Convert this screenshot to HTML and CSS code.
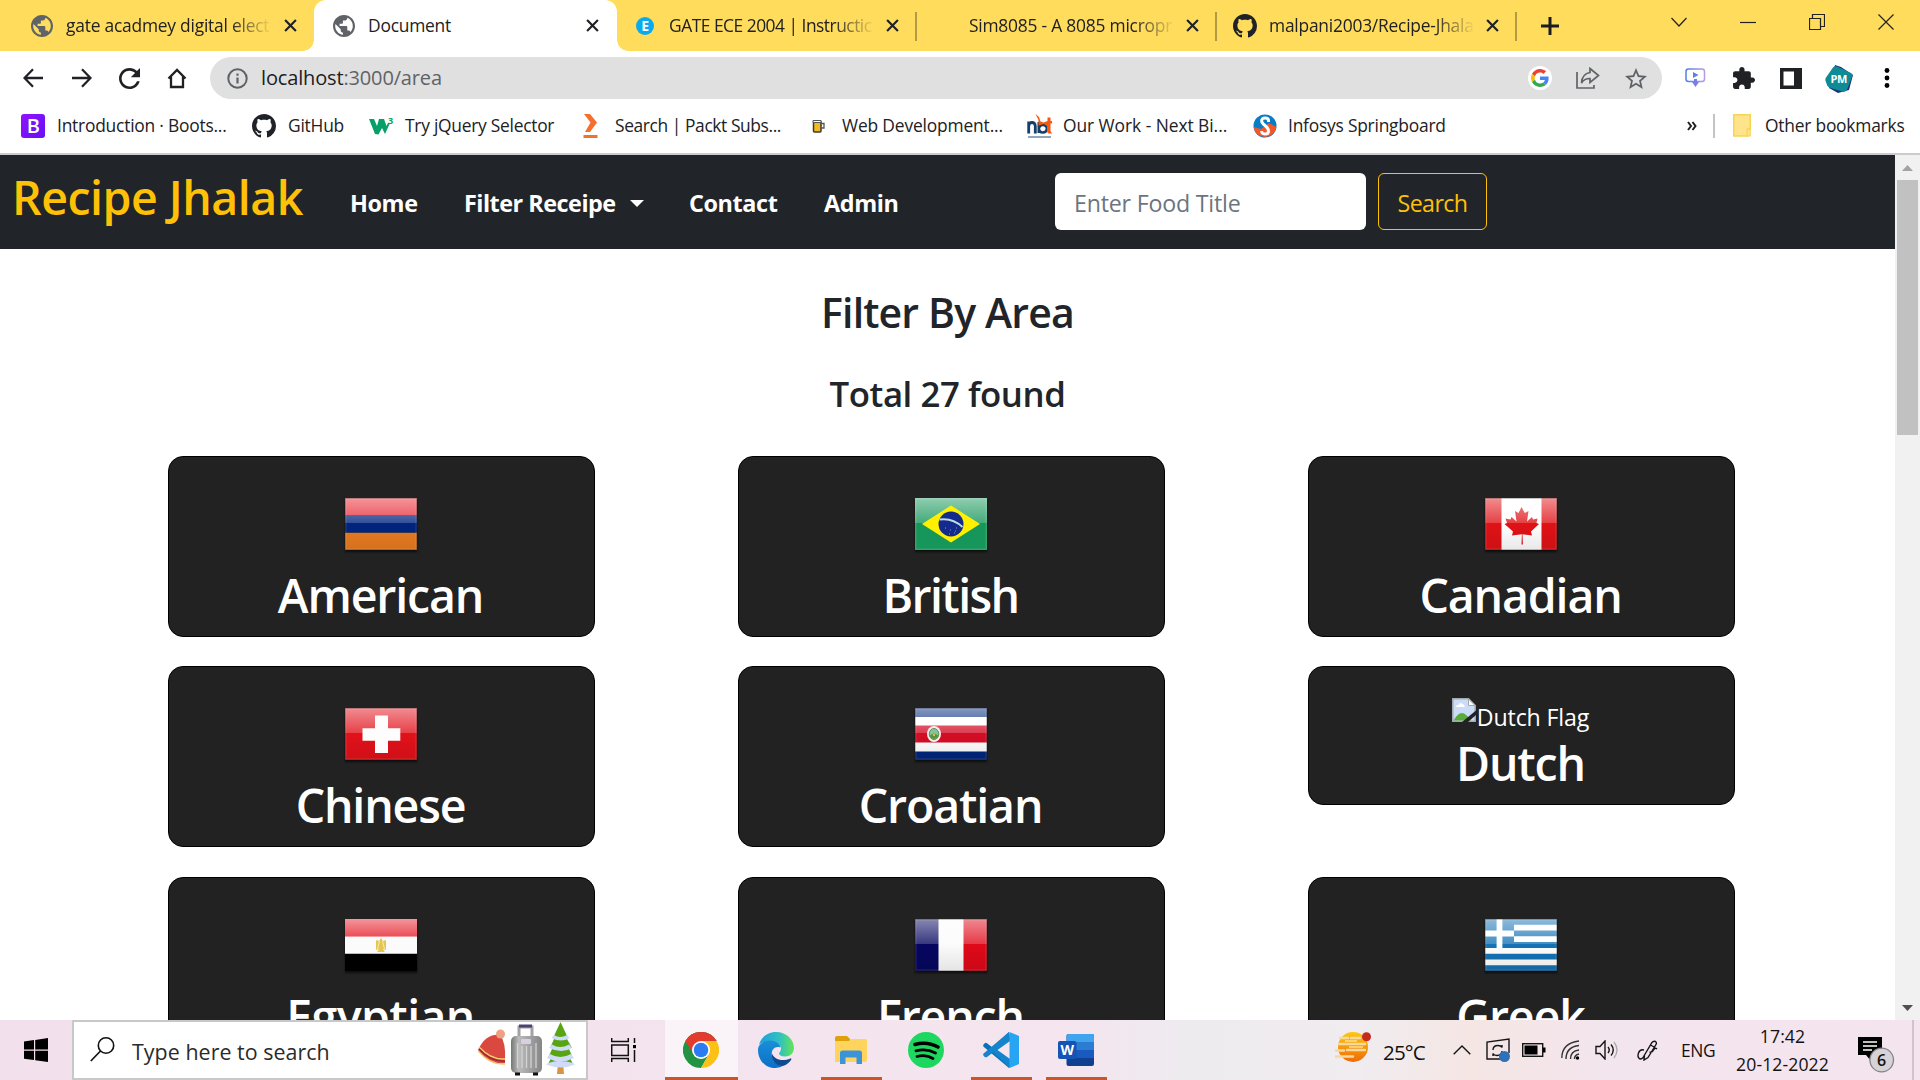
FILE: index.html
```html
<!DOCTYPE html>
<html lang="en">
<head>
<meta charset="utf-8">
<title>Document</title>
<link rel="stylesheet" href="styles.css">
</head>
<body>
<svg class="defs" width="0" height="0">
  <defs>
    <linearGradient id="gloss" x1="0" y1="0" x2="0" y2="1"><stop offset="0" stop-color="#fff" stop-opacity=".52"/><stop offset="1" stop-color="#fff" stop-opacity=".2"/></linearGradient>
    <linearGradient id="shade" x1="0" y1="0" x2="0" y2="1"><stop offset="0" stop-opacity="0"/><stop offset="1" stop-opacity=".09"/></linearGradient>
    <symbol id="globe" viewBox="2 2 20 20"><path fill="#5f6368" d="M12 2C6.48 2 2 6.48 2 12s4.48 10 10 10 10-4.480 10-10S17.520 2 12 2zm-1 17.930c-3.950-.49-7-3.850-7-7.930 0-.62.08-1.210.21-1.790L9 15v1c0 1.100.9 2 2 2v1.930zm6.900-2.540c-.26-.81-1-1.390-1.900-1.390h-1v-3c0-.55-.45-1-1-1H8v-2h2c.55 0 1-.45 1-1V7h2c1.100 0 2-.9 2-2v-.41c2.930 1.190 5 4.060 5 7.410 0 2.080-.8 3.970-2.100 5.390z"/></symbol>
    <symbol id="github" viewBox="0 0 16 16"><path fill="#1f2328" d="M8 0C3.580 0 0 3.580 0 8c0 3.540 2.290 6.530 5.470 7.590.4.07.55-.17.55-.38 0-.19-.01-.82-.01-1.490-2.010.37-2.530-.49-2.690-.94-.09-.23-.48-.94-.82-1.130-.28-.15-.68-.52-.01-.53.63-.01 1.080.58 1.230.82.72 1.210 1.870.87 2.330.66.07-.52.28-.87.51-1.070-1.780-.2-3.640-.89-3.640-3.950 0-.87.31-1.590.82-2.150-.08-.2-.36-1.020.08-2.120 0 0 .67-.21 2.200.82.64-.18 1.320-.27 2-.27.68 0 1.360.09 2 .27 1.530-1.040 2.200-.82 2.200-.82.44 1.100.16 1.920.08 2.120.51.56.82 1.270.82 2.150 0 3.070-1.870 3.750-3.650 3.950.29.25.54.73.54 1.480 0 1.070-.01 1.930-.01 2.200 0 .21.15.46.55.38A8.012 8.012 0 0 0 16 8c0-4.420-3.580-8-8-8z"/></symbol>
    <symbol id="x" viewBox="0 0 12 12"><path d="M1 1l10 10M11 1L1 11" stroke="#1f2124" stroke-width="2" fill="none"/></symbol>
    <symbol id="glass" viewBox="0 0 72 52"><rect width="72" height="25" fill="url(#gloss)"/><rect y="25" width="72" height="27" fill="url(#shade)"/><rect x=".8" y=".8" width="70.400" height="50.400" fill="none" stroke="#fff" stroke-opacity=".16" stroke-width="1.200"/><rect x=".3" y=".3" width="71.400" height="51.400" fill="none" stroke="#000" stroke-opacity=".35" stroke-width=".7"/></symbol>
  </defs>
</svg>

<header class="tabs">
  <div class="tab tab-first"><svg class="fav"><use href="#globe"/></svg><span class="tab-title fade">gate acadmey digital elect</span><svg class="tab-x"><use href="#x"/></svg></div>
  <div class="tab tab-active"><svg class="fav"><use href="#globe"/></svg><span class="tab-title">Document</span><svg class="tab-x"><use href="#x"/></svg></div>
  <div class="tab tab-gate"><svg class="fav-e" viewBox="0 0 18 18"><circle cx="9" cy="9" r="9" fill="#0aaaf0"/><text x="9" y="14" text-anchor="middle" class="glyph-e">E</text></svg><span class="tab-title fade tight">GATE ECE 2004 | Instructic</span><svg class="tab-x"><use href="#x"/></svg></div>
  <div class="tab tab-sim"><span class="tab-title fade">Sim8085 - A 8085 micropr</span><svg class="tab-x"><use href="#x"/></svg></div>
  <div class="tab tab-git"><svg class="fav-git"><use href="#github"/></svg><span class="tab-title fade">malpani2003/Recipe-Jhala</span><svg class="tab-x"><use href="#x"/></svg></div>
  <div class="new-tab"><svg width="18" height="18"><path d="M9 0v18M0 9h18" stroke="#1b1c1e" stroke-width="3"/></svg></div>
  <div class="win">
    <svg width="16" height="16"><path d="M.5 4l7.500 8 7.500-8" class="hair"/></svg>
    <svg width="16" height="16"><path d="M0 8.500h16" class="hair"/></svg>
    <svg width="16" height="16"><path d="M.5 4.500h11v11h-11zM3.500 4.500v-4h12v12h-4" class="hair"/></svg>
    <svg width="16" height="16"><path d="M.5.5l15 15M15.500.5l-15 15" class="hair"/></svg>
  </div>
</header>

<div class="toolbar">
  <div class="slot"><svg width="21" height="20"><path d="M20 10H2M10 1.200L1.500 10l8.500 8.800" class="ink"/></svg></div>
  <div class="slot slot-fwd"><svg width="21" height="20"><path d="M1 10h18M11 1.200L19.500 10 11 18.800" class="ink"/></svg></div>
  <div class="slot"><svg width="21" height="21" viewBox="4 4 16 16"><path fill="#1f2124" d="M17.650 6.350C16.200 4.900 14.210 4 12 4c-4.420 0-7.990 3.580-7.990 8s3.570 8 7.990 8c3.730 0 6.840-2.550 7.730-6h-2.080c-.82 2.330-3.040 4-5.650 4-3.310 0-6-2.690-6-6s2.690-6 6-6c1.660 0 3.140.69 4.220 1.780L13 11h7V4l-2.350 2.350z"/></svg></div>
  <div class="slot slot-home"><svg width="20" height="21"><path d="M1.500 10.500L10 2l8.500 8.500M4 8.500V19h12V8.500" class="ink"/></svg></div>
  <div class="omnibox">
    <svg width="21" height="21"><circle cx="10.500" cy="10.500" r="9.200" fill="none" stroke="#5f6368" stroke-width="2"/><path d="M10.500 9.500v6M10.500 5.500v2.300" stroke="#5f6368" stroke-width="2.200"/></svg>
    <span class="url">localhost<span class="url-rest">:3000/area</span></span>
    <div class="omni-actions">
      <div class="slot"><svg width="24" height="24" viewBox="0 0 24 24"><circle cx="12" cy="12" r="12" fill="#fff"/><g transform="translate(3 3) scale(.375)"><path fill="#EA4335" d="M24 9.500c3.540 0 6.710 1.220 9.210 3.600l6.850-6.850C35.900 2.380 30.470 0 24 0 14.620 0 6.510 5.380 2.560 13.220l7.980 6.190C12.430 13.720 17.740 9.500 24 9.500z"/><path fill="#4285F4" d="M46.980 24.550c0-1.570-.15-3.090-.38-4.550H24v9.020h12.940c-.58 2.960-2.260 5.480-4.780 7.180l7.730 6c4.510-4.180 7.090-10.360 7.090-17.650z"/><path fill="#FBBC05" d="M10.530 28.590c-.48-1.450-.76-2.990-.76-4.590s.27-3.140.76-4.590l-7.980-6.190C.92 16.460 0 20.120 0 24c0 3.880.92 7.540 2.560 10.780l7.970-6.190z"/><path fill="#34A853" d="M24 48c6.480 0 11.930-2.130 15.890-5.810l-7.730-6c-2.150 1.450-4.920 2.300-8.160 2.300-6.260 0-11.570-4.220-13.470-9.910l-7.980 6.190C6.510 42.620 14.620 48 24 48z"/></g></svg></div>
      <div class="slot"><svg width="24" height="22"><path d="M1 5v16h17v-3" fill="none" stroke="#606367" stroke-width="1.700"/><path d="M14 1.500l8.500 7-8.500 7v-4c-4 0-6.500 1-8.500 4.500.3-5 3-9.500 8.500-10.500z" fill="none" stroke="#606367" stroke-width="1.700"/></svg></div>
      <div class="slot"><svg width="22" height="21" viewBox="2 2 20 19"><path fill="#5f6368" d="M22 9.240l-7.190-.62L12 2 9.190 8.630 2 9.240l5.460 4.730L5.820 21 12 17.270 18.180 21l-1.630-7.030L22 9.240zM12 15.400l-3.760 2.270 1-4.280-3.320-2.880 4.380-.38L12 6.100l1.710 4.040 4.380.38-3.320 2.880 1 4.280L12 15.400z"/></svg></div>
    </div>
  </div>
  <div class="ext">
    <div class="slot"><svg width="21" height="20"><defs><linearGradient id="vid"><stop stop-color="#4a82e4"/><stop offset="1" stop-color="#b99ae0"/></linearGradient></defs><rect x="1" y="1" width="18.500" height="12.500" rx="2.500" fill="#fff" stroke="url(#vid)" stroke-width="1.500"/><path d="M8 4l5.500 3L8 10z" fill="#5b7fe8"/><path d="M9 11h3v3h2l-3.500 5L7 14h2z" fill="#7a7fe4"/></svg></div>
    <div class="slot"><svg width="23" height="23" viewBox="1 1 22 22"><path fill="#1f2124" d="M20.500 11H19V7c0-1.100-.9-2-2-2h-4V3.500C13 2.120 11.880 1 10.500 1S8 2.120 8 3.500V5H4c-1.100 0-1.990.9-1.990 2v3.800H3.500c1.490 0 2.700 1.210 2.700 2.700s-1.210 2.700-2.700 2.700H2V20c0 1.100.9 2 2 2h3.800v-1.500c0-1.490 1.210-2.700 2.700-2.700 1.490 0 2.700 1.210 2.700 2.700V22H17c1.100 0 2-.9 2-2v-4h1.500c1.380 0 2.500-1.120 2.500-2.500S21.880 11 20.500 11z"/></svg></div>
    <div class="slot"><svg width="22" height="21"><rect width="22" height="21" fill="#1f2124"/><rect x="3.500" y="3.500" width="10.500" height="14" fill="#fff"/></svg></div>
    <div class="slot slot-me"><svg width="28" height="28" viewBox="0 0 28 28"><path d="M10 0l6 2 12 8-4 15-11 3-9-5z" fill="#20317c"/><path d="M8 2.500Q9.500.5 12 1.500l14 6.500q2 1 1.300 3l-5 13q-1 2.800-3.500 3L5.500 23q-2.500-.6-3.300-2.500L.4 15.500q-.4-1.500.6-3z" fill="#0e8b94"/><text x="13.800" y="17.800" text-anchor="middle" class="glyph-pm">PM</text></svg></div>
    <div class="slot"><svg width="6" height="20"><circle cx="3" cy="2.500" r="2.400"/><circle cx="3" cy="10" r="2.400"/><circle cx="3" cy="17.500" r="2.400"/></svg></div>
  </div>
</div>

<nav class="bookmarks">
  <div class="bm bm-boot"><svg width="24" height="24"><defs><linearGradient id="bs" x1="0" y1="0" x2="1" y2="1"><stop stop-color="#9013fe"/><stop offset="1" stop-color="#6610f2"/></linearGradient></defs><rect width="24" height="24" rx="3" fill="url(#bs)"/><text x="12.200" y="19.200" text-anchor="middle" class="glyph-b">B</text></svg><span>Introduction · Boots...</span></div>
  <div class="bm bm-git"><svg width="24" height="24"><use href="#github"/></svg><span>GitHub</span></div>
  <div class="bm bm-jq"><svg width="25" height="24"><path d="M0 5h5l3 7 2-7h5l2.500 7 1.500-3h2L16 20l-3-6-3.500 6.500L6 20z" fill="#04a068"/><text x="19" y="9.500" class="glyph-3">3</text></svg><span>Try jQuery Selector</span></div>
  <div class="bm bm-packt"><svg width="18" height="24"><path d="M2 0h6l7 8.500L8 18H3l5.500-9.500zM1.500 21h14v3h-14z" fill="#f4702b"/></svg><span>Search | Packt Subs...</span></div>
  <div class="bm bm-web"><svg width="13" height="14"><rect x="1.500" y="2" width="7.500" height="11" rx="1" fill="#eebb22" stroke="#3e3a32" stroke-width="1.500"/><path d="M1 1.500h8v2H1z" fill="#fff" stroke="#555"/><path d="M9 4.500h3v4.500H9" fill="none" stroke="#555" stroke-width="1.300"/></svg><span>Web Development...</span></div>
  <div class="bm bm-next"><svg width="25" height="24"><path d="M1.700 19.500V7.500M1.700 12q.3-3.500 3.300-3.500T8.300 12v7.500" fill="none" stroke="#143f66" stroke-width="2.800"/><path d="M11.800 8v11M12 14a4 3.800 0 1 1 4 4.500q-4 0-4-4" fill="none" stroke="#143f66" stroke-width="2.600"/><path d="M8.500 0l3.500 3 1.500 4.500 3 1 4-1.500V3.500h3V7H25v2.500h-1.500V17l1.500 2.500h-3q-2-.5-2-3v-5l-3-1.500-5.500 1.500V6z" fill="#f9570d"/><path d="M1 23h23" stroke="#6e8aa4" stroke-width="1.500"/></svg><span>Our Work - Next Bi...</span></div>
  <div class="bm bm-info"><svg width="24" height="24" viewBox="0 0 24 24"><circle cx="12" cy="12" r="11.500" fill="#0a7cc4"/><path d="M.6 13A11.500 11.500 0 0 0 23.400 13L16 9l-8 6z" fill="#f1592a"/><path d="M15.500 8V6.500q0-2.500-3.500-2.500T8.700 7q0 2 3.300 4.500T15.500 17q0 3-3.500 3t-3.300-3" fill="none" stroke="#fff" stroke-width="3"/></svg><span>Infosys Springboard</span></div>
  <div class="bm-more"><svg width="10" height="10"><path d="M1 1l3 4-3 4M5.500 1l3 4-3 4" fill="none" stroke="#1f2124" stroke-width="2"/></svg></div>
  <div class="bm bm-other"><svg width="18" height="23"><path d="M.8.8h16.400V15h-2.500v7H.8z" fill="#ffe48b" stroke="#f7d453" stroke-width="1.600"/><path d="M14 22v-6.500h3.200V22z" fill="#ffe48b" stroke="#f7d453" stroke-width="1.200"/></svg><span>Other bookmarks</span></div>
</nav>

<div class="viewport">
  <main class="page">
    <div class="navbar">
      <span class="brand">Recipe Jhalak</span>
      <span class="link link-home">Home</span>
      <span class="link link-filter">Filter Receipe<i class="caret"></i></span>
      <span class="link link-contact">Contact</span>
      <span class="link link-admin">Admin</span>
      <div class="field">Enter Food Title</div>
      <div class="btn">Search</div>
    </div>
    <h2 class="title">Filter By Area</h2>
    <h3 class="count">Total 27 found</h3>
    <div class="grid">
      <div class="card"><svg class="flag" viewBox="0 0 72 52"><path fill="#e8222e" d="M0 0h72v17.500H0z"/><path fill="#00247f" d="M0 17.300h72v17.500H0z"/><path fill="#e97c20" d="M0 34.700h72V52H0z"/><use href="#glass" width="72" height="52"/></svg><h1 class="name">American</h1></div>
      <div class="card"><svg class="flag" viewBox="0 0 72 52"><path fill="#16965a" d="M0 0h72v52H0z"/><rect width="72" height="25" fill="url(#gloss)"/><path fill="#fff000" d="M7 26L36 7.500 65 26 36 44.500z"/><circle cx="36" cy="26" r="12.500" fill="#142a8c"/><path d="M24.500 21.500q13-2 23 7.500" stroke="#b9dce0" stroke-width="2" fill="none"/><path d="M30 30h1m4 2h1m4 1h1m-7 3h1m4-1h1m1-5h1" stroke="#7f9bd0"/><rect x=".8" y=".8" width="70.400" height="50.400" fill="none" stroke="#fff" stroke-opacity=".16" stroke-width="1.200"/></svg><h1 class="name name-tight">British</h1></div>
      <div class="card"><svg class="flag" viewBox="0 0 72 52"><path fill="#fff" d="M0 0h72v52H0z"/><path fill="#e01216" d="M0 0h16.500v52H0zM56.500 0H72v52H56.500zM36.500 9l3.300 6 3.700-2-1.500 10.500 5-4.500 1 2.500 4.500-1-1 4.500 2.500 1-8 7.500 1 4-9.500-1.300.4 10.300h-1.400l.4-10.300L27 37.500l1-4-8.500-7.500 2.500-1-1.500-4.500 5 1 1-2.500 5 4.500L30 13l3.500 2z"/><use href="#glass" width="72" height="52"/></svg><h1 class="name">Canadian</h1></div>

      <div class="card"><svg class="flag" viewBox="0 0 72 52"><path fill="#e2111a" d="M0 0h72v52H0z"/><use href="#glass" width="72" height="52"/><path fill="#fdfdfd" d="M30 7.500h13v12.700h12.300v12.600H43V45H30V32.800H17.500V20.200H30z"/></svg><h1 class="name">Chinese</h1></div>
      <div class="card"><svg class="flag" viewBox="0 0 72 52"><path fill="#fff" d="M0 0h72v52H0z"/><path fill="#00267c" d="M0 0h72v9H0zM0 43.500h72V52H0z"/><path fill="#d40d26" d="M0 17.500h72v17H0z"/><use href="#glass" width="72" height="52"/><ellipse cx="19" cy="26" rx="7" ry="8" fill="#f8efe9"/><ellipse cx="19" cy="26" rx="4.800" ry="5.500" fill="#7fc6a2" stroke="#668b63"/><path d="M14.500 28q4.500-5 9 0-4.500 6-9 0z" fill="#55943a"/><circle cx="19" cy="27" r="1.200" fill="#f3b533"/></svg><h1 class="name">Croatian</h1></div>
      <div class="card card-short"><div class="missing"><svg width="24" height="24" viewBox="0 0 24 24"><path d="M.8.8h15.700l6.700 6.700V23.200H.8z" fill="#cbdcf8" stroke="#a4a8ad" stroke-width="1.600"/><path d="M16.500 1v6.500H23z" fill="#fff" stroke="#a4a8ad"/><path d="M4 9q0-2.500 2.500-2 1.500-3.500 4-1 2.500.5 2 3z" fill="#fff"/><path d="M1.600 22.400q8-15 17 0z" fill="#58ac38"/><path d="M10 24L24 12.500V17l-8 7z" fill="#222"/></svg><span>Dutch Flag</span></div><h1 class="name">Dutch</h1></div>

      <div class="card"><svg class="flag" viewBox="0 0 72 52"><path fill="#fbfbfb" d="M0 0h72v52H0z"/><path fill="#e8222e" d="M0 0h72v17.500H0z"/><rect width="72" height="17.500" fill="url(#gloss)"/><path d="M0 34.700h72V52H0z"/><path d="M31 21l3 1 2-3 2 3 3-1v10l-3-1 2 3h-8l2-3-3 1z" fill="#e6c653"/><path d="M34.500 22l-2 8M37.500 22l2 8" stroke="#f7eab0"/></svg><h1 class="name name-wide">Egyptian</h1></div>
      <div class="card"><svg class="flag" viewBox="0 0 72 52"><path fill="#fbfbfb" d="M0 0h72v52H0z"/><path fill="#060660" d="M0 0h23.500v52H0z"/><path fill="#df0919" d="M48.500 0H72v52H48.500z"/><use href="#glass" width="72" height="52"/></svg><h1 class="name">French</h1></div>
      <div class="card"><svg class="flag" viewBox="0 0 72 52"><path fill="#1572b4" d="M0 0h72v52H0z"/><path d="M0 8.700h72M0 20.200h72M0 31.800h72M0 43.300h72" stroke="#fff" stroke-width="5.800"/><path fill="#1572b4" d="M0 0h29v29H0z"/><path d="M14.500 0v29M0 14.500h29" stroke="#fff" stroke-width="5.800"/><use href="#glass" width="72" height="52"/></svg><h1 class="name">Greek</h1></div>
    </div>
  </main>
  <div class="scrollbar">
    <svg class="arrow" width="25" height="25"><path d="M7 16l5.500-6 5.500 6z" fill="#a3a3a3"/></svg>
    <div class="thumb"></div>
    <svg class="arrow arrow-down" width="25" height="25"><path d="M7 10l5.500 6 5.500-6z" fill="#505050"/></svg>
  </div>
</div>

<footer class="taskbar">
  <div class="start"><svg width="24" height="24"><path d="M0 3.500l10-1.400v9.400H0zM11.200 1.900L24 0v11.500H11.200zM0 12.700h10v9.400L0 20.700zM11.200 12.700H24V24l-12.800-1.700z"/></svg></div>
  <div class="search">
    <svg width="25" height="25"><circle cx="16" cy="8.500" r="7.700" fill="none" stroke="#111" stroke-width="1.600"/><path d="M10.500 14L.8 24" stroke="#111" stroke-width="1.700"/></svg>
    <span class="search-text">Type here to search</span>
    <svg class="festive" width="98" height="54" viewBox="0 0 98 54">
      <defs><linearGradient id="case"><stop stop-color="#777"/><stop offset=".25" stop-color="#bbb"/><stop offset="1" stop-color="#858585"/></linearGradient></defs>
      <path d="M0 28Q8 11 22 13q6 7 5 25v3Q12 45 0 28z" fill="#d9493f"/><path d="M1 25q12 13 26 12M0 29q12 14 27 13" fill="none" stroke="#f1cf72" stroke-width="1.400"/><path d="M1 27q12 13 26 12" fill="none" stroke="#9f2631" stroke-width="1.500"/><circle cx="22.500" cy="12" r="4.500" fill="#efa083"/>
      <path d="M41 17V5h13v12" fill="none" stroke="#a1a1a8" stroke-width="3"/><path d="M41 4h13" stroke="#4d4173" stroke-width="3"/><rect x="33" y="14" width="31" height="37" rx="5" fill="url(#case)"/><path d="M39.500 21v25M44 24v22M48.500 24v22M53 24v22M58 21v25" stroke="#d3d3d3" stroke-width="1.300"/><rect x="43" y="17" width="10" height="5" rx="1" fill="#d9d0df"/><path d="M37 52h5M55 52h5" stroke="#111" stroke-width="3"/>
      <path d="M80 41h5l1 11h-7z" fill="#d99345"/><path d="M82.500 0L75 16h15zM76 17h13l5 9H72zM74 27h17l4 9H70zM73 36h19l3 6H70z" fill="#58a512"/><path d="M76 13q6 4 13 0l2.500 3q-8 5-18 0zM74 22.500q8 5 17 0l3 3.500q-10 6-23 0zM72 32q10 6 21 0l3 4q-13 7-27 0zM70 41q12-4 25 0l2 1.500q-14 6-29 0z" fill="#cfdbf8"/>
    </svg>
  </div>
  <div class="app app-view"><svg width="26" height="24"><path d="M.7 0v3.500h16.600V0M.7 7h16.600v10.500H.7zM.7 24v-3.500h16.600V24" fill="none" stroke="#111" stroke-width="1.500"/><path d="M23.500 0v5M23.500 12v12" stroke="#111" stroke-width="1.500"/><path d="M22 7h3v3.200h-3z"/></svg></div>
  <div class="app app-current"><svg width="36" height="36" viewBox="0 0 48 48"><circle cx="24" cy="24" r="24" fill="#fff"/><path d="M24 24L3.200 12A24 24 0 0 1 44.800 12z" fill="#e33b2e"/><path d="M3.200 12A24 24 0 0 0 24 48L34.400 30z" fill="#229342"/><path d="M44.800 12A24 24 0 0 1 24 48l10.400-18L24 12z" fill="#fbc116"/><path d="M3.200 12L14 30l10-18h20.800A24 24 0 0 0 3.200 12z" fill="#229342"/><path d="M3.200 12A24 24 0 0 1 44.800 12H24L13.600 29z" fill="#e33b2e"/><circle cx="24" cy="24" r="12" fill="#fff"/><circle cx="24" cy="24" r="9.700" fill="#2b7cf0"/></svg></div>
  <div class="app"><svg width="36" height="36" viewBox="0 0 36 36"><defs><linearGradient id="e1"><stop stop-color="#1c9fdc"/><stop offset=".6" stop-color="#31c1c0"/><stop offset="1" stop-color="#65e552"/></linearGradient><linearGradient id="e2" x1="0" y1="0" x2="0" y2="1"><stop stop-color="#1a8fd8"/><stop offset="1" stop-color="#0b6fc8"/></linearGradient></defs><path d="M1 13C3 5 10 0 18 0c11 0 18 8 18 16 0 5-4 8.500-9 8.500-4 0-6-1.500-6-3 0-1 2-2 2-5 0-4-5-7.500-10-7.500C7 9 3 11 1 13z" fill="url(#e1)"/><path d="M0 18C0 12 6 8.500 12 8.500c6 0 10.500 3.500 10.500 7-6-2-10 3-8.500 9 1.300 5 6 9 10.500 9.500C20 36.500 15 36 15 36 6 35 0 27 0 18z" fill="url(#e2)"/><path d="M13.800 21c-1 7 5 13.500 11 13 4-1 7-4 8.500-6.500.5-1-.3-1.300-1-1-9 4-17 0-18.500-5.500z" fill="#114a8f"/></svg></div>
  <div class="app app-open"><svg width="32" height="28" viewBox="0 0 32 28"><path d="M0 2Q0 0 2 0h10l3 3v3H0z" fill="#e0a00a"/><path d="M0 5h14l2-2h14q2 0 2 2v19q0 2-2 2H0z" fill="#ffd45c"/><path d="M5 28V17q0-2.500 2.500-2.500h17Q27 14.500 27 17v11h-5.500v-6.500h-11V28z" fill="#3c93d9"/></svg></div>
  <div class="app"><svg width="36" height="36" viewBox="0 0 36 36"><circle cx="18" cy="18" r="18" fill="#1ed760"/><path d="M7 12.500q12-3.500 23 2.500" stroke="#000" stroke-width="3.600" fill="none" stroke-linecap="round"/><path d="M8 18.800q10.500-2.800 19.500 2.200M9 24.500q9-2.300 16 2" stroke="#000" stroke-width="2.800" fill="none" stroke-linecap="round"/></svg></div>
  <div class="app app-open"><svg width="36" height="36" viewBox="0 0 36 36"><path d="M26 0L9.500 15.500 4 11.200q-1.200-.8-2.300 0L.6 12.500q-1 1 0 2.200L26 36l1-9V9z" fill="#0b70b8"/><path d="M27 36L10 20.500 4 25q-1.200.7-2.200-.1L.6 23.800q-1-1.200 0-2.400L26 0l2 10z" fill="#1484cc"/><path d="M27 9L14.500 18 27 27z" fill="#f5e6f0"/><path d="M26.500 0L36 4v28l-9.500 4z" fill="#28a5f2"/></svg></div>
  <div class="app app-open"><svg width="36" height="32" viewBox="0 0 36 32"><rect x="8.500" width="27.500" height="32" rx="2" fill="#103f91"/><path d="M8.500 16H36v8H8.500z" fill="#185abd"/><path d="M8.500 8H36v8H8.500z" fill="#2b7cd3"/><path d="M10.500 0H34q2 0 2 2v6H8.500V2q0-2 2-2z" fill="#41a5ee"/><rect y="7" width="18.500" height="18" rx="2" fill="#1553b5"/><text x="9.200" y="21" text-anchor="middle" class="glyph-w">W</text></svg></div>
  <div class="tray">
    <svg class="weather" width="36" height="30" viewBox="0 0 36 30"><defs><linearGradient id="sun" x1="0" y1="0" x2="0" y2="1"><stop stop-color="#fdc90d"/><stop offset="1" stop-color="#ef6a0a"/></linearGradient></defs><circle cx="18" cy="15" r="15" fill="url(#sun)"/><path d="M5 6h8m3 0h9M4 12h26m-18 6h18M0 18.500h9M0 24.500h18" stroke="#f7d9a0" stroke-width="2.400" stroke-linecap="round"/><path d="M10 9h12M14 15h14" stroke="#ffe08a" stroke-width="1.500"/><circle cx="31.500" cy="4.700" r="4.500" fill="#c42b1c"/></svg>
    <span class="temp">25°C</span>
    <div class="ico"><svg width="18" height="10"><path d="M.7 9.300L9 1l8.300 8.300" class="thin"/></svg></div>
    <div class="ico"><svg width="25" height="24"><path d="M14 21H1V4l22-3v14" class="thin"/><path d="M7 12q0-4.500 5-4.500 3 0 4 2V7M16 13q0 4.500-5 4.500-3 0-4-2V18" class="thin"/><circle cx="18.500" cy="18.500" r="5.500" fill="#2b72b9"/></svg></div>
    <div class="ico"><svg width="24" height="14"><rect x=".7" y=".7" width="20" height="12.600" class="thin"/><path d="M2.500 2.500h13v9h-13zM21 4.500h2.500v5H21z"/></svg></div>
    <div class="ico"><svg width="19" height="20"><path d="M.8 18Q1 3 18 1M5 19Q5 7 18 5.500M9.500 19q0-8 8.500-9M13.500 19q0-4 4.500-5" fill="none" stroke="#333" stroke-width="1.400"/><circle cx="16.500" cy="18" r="1.700"/></svg></div>
    <div class="ico"><svg width="23" height="20"><path d="M1 6.500h4L10 1v18l-5-5.500H1z" class="thin"/><path d="M13 7q2.500 3 0 6M16 4.500q4.500 5.500 0 11" class="thin"/><path d="M19 2q6 8 0 16" fill="none" stroke="#aaa" stroke-width="1.300"/></svg></div>
    <div class="ico ico-pen"><svg width="21" height="21"><path d="M7.500 15L15 2.500q1.500-2 3.500-1 1.500 1.300.5 3L11 17.500l-4 2.500zM13.500 5l4.500 2.500M7 10q-4-1-5.500 3-1.500 5 1.500 6 3 0 4.500-4M12.500 12q3 .5 4-2 1.500-3 3.500-1" class="thin"/></svg></div>
    <span class="lang">ENG</span>
    <div class="clock"><span>17:42</span><span>20-12-2022</span></div>
    <svg class="notif" width="37" height="37"><path d="M0 1h24v18H14l-1 6-5-6H0z"/><path d="M5 6h14M5 10h14M5 14h9" stroke="#fff" stroke-width="1.400"/><circle cx="23.700" cy="24" r="11.800" fill="#d5d3d5" stroke="#85838a" stroke-width="1.300"/><text x="23.700" y="29.800" text-anchor="middle" class="glyph-6">6</text></svg>
  </div>
</footer>
</body>
</html>
```
FILE: styles.css
```css
* { box-sizing: border-box; }

body {
  margin: 0;
  width: 1920px;
  height: 1080px;
  overflow: hidden;
  display: flex;
  flex-direction: column;
  background: #fff;
  color: #202124;
  font: 17.4px/26px "Open Sans", "Noto Sans", sans-serif;
  letter-spacing: -0.22px;
}
svg { display: block; flex: none; }
.defs { position: absolute; }

/* tab strip */
.tabs { display: flex; height: 51px; flex: none; background: #ffdc5c; align-items: center; }
.tab { display: flex; align-items: center; height: 51px; padding-right: 18px; }
.tab-first { width: 314px; padding-left: 31px; }
.tab-active {
  width: 303px;
  padding: 0 18px 0 19px;
  background: #fff;
  border-radius: 12px 12px 0 0;
  position: relative;
}
.tab-active::before, .tab-active::after {
  content: "";
  position: absolute;
  bottom: 0;
  width: 11px;
  height: 11px;
}
.tab-active::before { left: -11px; background: radial-gradient(circle at 0 0, transparent 10.5px, #fff 11px); }
.tab-active::after { right: -11px; background: radial-gradient(circle at 100% 0, transparent 10.5px, #fff 11px); }
.tab-gate { width: 300px; padding-left: 19px; }
.tab-sim { width: 300px; padding-left: 52px; }
.tab-git { width: 300px; padding-left: 16px; }
.tab-gate, .tab-sim, .tab-git {
  background: linear-gradient(#b39b45, #b39b45) right 0 top 12px / 2px 29px no-repeat;
}
.fav { width: 22px; height: 22px; margin-right: 13px; }
.fav-e { width: 18px; height: 18px; margin-right: 15px; }
.fav-git { width: 24px; height: 24px; margin-right: 12px; }
.tab-title { flex: 1; white-space: nowrap; margin-right: 11px; min-width: 0; padding-bottom: 1px; }
.tab-first .tab-title { margin-right: 12px; }
.fade { -webkit-mask-image: linear-gradient(90deg, #000 calc(100% - 42px), transparent); mask-image: linear-gradient(90deg, #000 calc(100% - 42px), transparent); }
.tight { letter-spacing: -0.5px; }
.tab-x { width: 13px; height: 13px; }
.tab-first .tab-x { margin-right: -1px; }
.new-tab { width: 66px; display: grid; place-items: center; }
.win { display: flex; margin-left: auto; padding: 0 26px 7px 0; gap: 53px; }
.hair { fill: none; stroke: #222; stroke-width: 1.2; }
.ink { fill: none; stroke: #1f2124; stroke-width: 2.3; }

/* address row */
.toolbar { display: flex; align-items: center; height: 54px; flex: none; padding-left: 9px; }
.slot { width: 49px; height: 42px; display: grid; place-items: center; }
.slot-fwd { width: 47px; }
.slot-home { width: 46px; margin-right: 10px; }
.omnibox {
  display: flex;
  align-items: center;
  width: 1452px;
  height: 42px;
  padding: 0 2px 0 17px;
  border-radius: 21px;
  background: #e0e0e0;
}
.url { margin-left: 13px; font-size: 20px; letter-spacing: -0.15px; }
.url-rest { color: #5f6368; }
.omni-actions { display: flex; margin-left: auto; }
.omni-actions .slot, .ext .slot { width: 48px; }
.ext { display: flex; margin-left: 9px; }
.slot-me { padding-top: 1px; }

/* bookmarks */
.bookmarks {
  display: flex;
  align-items: center;
  height: 50px;
  flex: none;
  padding: 0 0 7px 21px;
  border-bottom: 2px solid #ccc;
  white-space: nowrap;
}
.bm { display: flex; align-items: center; gap: 12px; }
.bm span { padding-bottom: 1px; }
.bm-boot { width: 231px; letter-spacing: -0.22px; }
.bm-git { width: 117px; }
.bm-jq { width: 213px; gap: 11px; letter-spacing: -0.26px; }
.bm-packt { width: 230px; gap: 15px; letter-spacing: -0.4px; }
.bm-web { width: 215px; gap: 17px; letter-spacing: -0.16px; }
.bm-next { width: 226px; gap: 11px; letter-spacing: -0.05px; }
.bm-info { width: 395px; gap: 11px; }
.bm-more { margin: 0 auto 0 39px; }
.bm-other { border-left: 2px solid #c4c4c4; height: 24px; width: 207px; padding-left: 18px; gap: 14px; }

/* page */
.viewport { display: flex; flex: 1; min-height: 0; overflow: hidden; }
.page { width: 1895px; overflow: hidden; color: #212529; }
.navbar {
  display: flex;
  align-items: center;
  height: 94px;
  padding: 0 0 2px 12px;
  background: #212529;
  color: #fff;
}
.brand { width: 338px; color: #ffc107; font-size: 46.5px; font-weight: 600; line-height: 60px; letter-spacing: -0.5px; padding-bottom: 9px; }
.link { font-size: 23.4px; font-weight: 700; letter-spacing: -0.4px; display: flex; align-items: center; padding-top: 4px; }
.link-home { width: 114px; }
.link-filter { width: 225px; gap: 14px; letter-spacing: -0.5px; }
.link-contact { width: 135px; }
.link-admin { width: 231px; }
.caret { border: 7px solid transparent; border-top-color: #fff; border-bottom: 0; }
.field, .btn {
  height: 57px;
  border-radius: 6px;
  font-size: 23.2px;
  line-height: 61px;
  letter-spacing: -0.2px;
}
.field { width: 311px; padding-left: 19px; margin-right: 12px; background: #fff; color: #6c757d; }
.btn { width: 109px; border: 1.5px solid #ffc107; color: #ffc107; text-align: center; letter-spacing: -0.6px; line-height: 59px; }
.title, .count { margin: 0; text-align: center; font-weight: 600; }
.title { margin-top: 37px; font-size: 41px; line-height: 52px; letter-spacing: -0.85px; }
.count { margin-top: 34px; font-size: 34.8px; line-height: 44px; letter-spacing: -0.45px; }
.grid {
  display: grid;
  grid-template-columns: repeat(3, 427px);
  grid-auto-rows: 180px;
  gap: 30.3px 143px;
  padding: 40px 0 0 168px;
}
.card {
  display: flex;
  flex-direction: column;
  align-items: center;
  height: 180.5px;
  padding: 41px 2px 0 0;
  border: 1px solid #000;
  border-radius: 15px;
  background: #222;
  color: #fff;
}
.card-short { height: 139px; padding-top: 31px; }
.flag { width: 72px; height: 52px; filter: drop-shadow(0 2px 1px rgba(0, 0, 0, .6)); }
.name { margin: 16px 0 0; font-size: 46.5px; font-weight: 600; line-height: 58px; letter-spacing: -1.15px; }
.name-tight { letter-spacing: -1.6px; }
.name-wide { letter-spacing: -0.6px; }
.card-short .name { margin-top: 1px; }
.missing { display: flex; gap: 1px; height: 35px; font-size: 23.2px; line-height: 39px; letter-spacing: -0.15px; }

.scrollbar { width: 25px; background: #f1f1f1; display: flex; flex-direction: column; }
.thumb { height: 255px; margin: 0 2px; background: #c1c1c1; }
.arrow-down { margin-top: auto; }

/* taskbar */
.taskbar {
  display: flex;
  height: 60px;
  flex: none;
  background: linear-gradient(90deg, #f2e1ec 0, #f4e5ef 1080px, #eeebef 1180px, #f0ecef 1360px, #f5e6e4 1470px, #f3e5ee 1620px, #f4e4ee 1920px);
  color: #111;
}
.start { width: 72px; display: grid; place-items: center; }
.search { width: 516px; border: 2px solid #c8c8c8; background: #fff; display: flex; align-items: center; padding: 0 10px 2px 16px; }
.search-text { margin-left: 17px; font-size: 21.4px; letter-spacing: 0.05px; padding-top: 6px; color: #2b2b2b; }
.festive { margin-left: auto; }
.app { width: 75px; display: grid; place-items: center; padding-right: 1px; }
.app-view { width: 76px; padding-right: 4px; }
.app-current { background: linear-gradient(90deg, transparent 1px, #faf4f9 1px, #faf4f9 74px, transparent 74px); }
.app-current, .app-open { position: relative; }
.app-current::after, .app-open::after {
  content: "";
  position: absolute;
  bottom: 0;
  left: 7px;
  width: 61px;
  height: 3px;
  background: #c8562a;
}
.app-current::after { left: 1px; width: 73px; }
.tray { display: flex; align-items: center; margin-left: auto; width: 585px; }
.weather { margin: 0 12px 6px 0; }
.temp { width: 61px; font-size: 20.6px; letter-spacing: -0.9px; padding-top: 4px; }
.ico { width: 36px; display: grid; place-items: center; }
.ico-pen { width: 46px; }
.thin { fill: none; stroke: #151515; stroke-width: 1.4; }
.lang { width: 56px; padding-left: 11px; font-size: 17.4px; letter-spacing: -0.4px; }
.clock { width: 113px; display: flex; flex-direction: column; align-items: center; line-height: 28px; font-size: 17.6px; letter-spacing: 0.1px; }
.notif { margin: 8px 17px 0 19px; }
.tray::after { content: ""; height: 60px; border-left: 2px solid #cfc3cd; }

/* lettering inside icons */
.glyph-e { font: 700 14px "Open Sans", sans-serif; fill: #fff; }
.glyph-b { font: 600 20px "Open Sans", sans-serif; fill: #fff; }
.glyph-3 { font: 700 9px "Open Sans", sans-serif; fill: #04a068; letter-spacing: 0; }
.glyph-pm { font: 700 11px "Open Sans", sans-serif; fill: #fff; }
.glyph-w { font: 700 14px "Open Sans", sans-serif; fill: #fff; letter-spacing: 0; }
.glyph-6 { font: 600 16px "Open Sans", sans-serif; fill: #111; letter-spacing: 0; }
```
